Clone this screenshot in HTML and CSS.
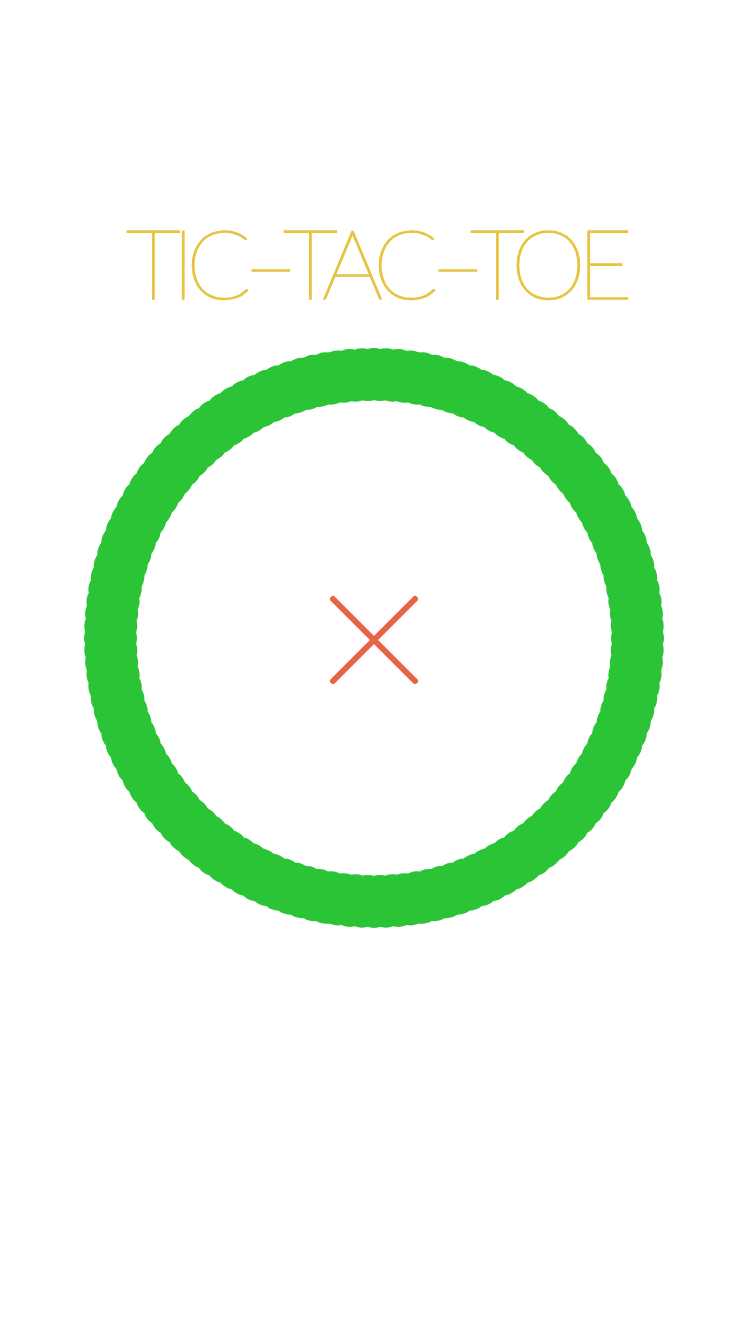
FILE: index.html
```html
<!DOCTYPE html>
<html>
<head>
<meta charset="utf-8">
<link rel="stylesheet" href="styles.css">
</head>
<body>
<main class="screen">
  <h1 class="title">TIC<span class="dash">-</span>TAC<span class="dash">-</span>TOE</h1>
  <div class="board">
    <svg class="ring" width="584" height="584" viewBox="0 0 584 584">
      <g fill="none" stroke="#2bc437">
        <circle cx="292" cy="292" r="263.5" stroke-width="50"/>
        <circle cx="292" cy="292" r="271" stroke-width="38" stroke-linecap="round" pathLength="1400" stroke-dasharray="0 10"/>
        <circle cx="292" cy="292" r="256" stroke-width="38" stroke-linecap="round" pathLength="1300" stroke-dasharray="0 10"/>
      </g>
    </svg>
    <svg class="mark" width="92" height="92" viewBox="0 0 92 92">
      <path d="M5 5 L87 87 M87 5 L5 87" stroke="#e86446" stroke-width="6" stroke-linecap="round" fill="none"/>
    </svg>
  </div>
</main>
</body>
</html>
```
FILE: styles.css
```css
html, body {
  margin: 0;
  padding: 0;
  background: #ffffff;
}
.screen {
  width: 750px;
  height: 1334px;
  display: flex;
  flex-direction: column;
  align-items: center;
}
.title {
  margin: 202px 0 0 0;
  font-family: "Lato", "Inter", sans-serif;
  font-weight: 100;
  font-size: 96px;
  line-height: 120px;
  color: #e6c441;
  -webkit-text-stroke: 1.6px #e6c441;
  letter-spacing: -9px;
  white-space: nowrap;
}
.dash {
  display: inline-block;
  transform: scaleX(1.7);
  margin: 0 7px;
}
.board {
  position: relative;
  width: 584px;
  height: 584px;
  margin-top: 24px;
  margin-left: -2px;
}
.ring {
  display: block;
}
.mark {
  position: absolute;
  left: 246px;
  top: 248px;
}
```
